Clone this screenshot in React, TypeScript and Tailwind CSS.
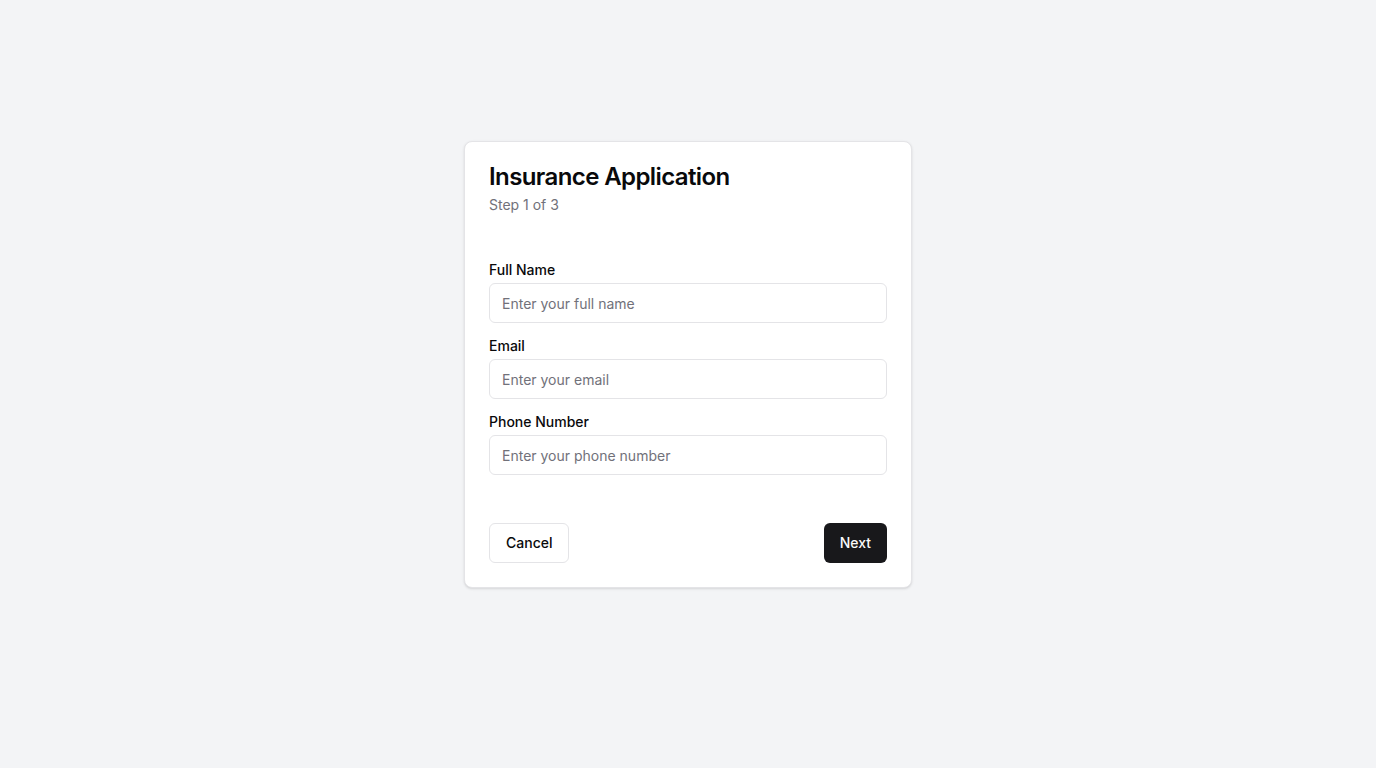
import { useState } from "react";

function Field({
  label,
  placeholder,
  type = "text",
}: {
  label: string;
  placeholder: string;
  type?: string;
}) {
  const [value, setValue] = useState("");
  return (
    <div>
      <label className="block text-sm font-medium text-[#09090b] mb-[3px]">
        {label}
      </label>
      <input
        type={type}
        value={value}
        onChange={(e) => setValue(e.target.value)}
        placeholder={placeholder}
        className="block w-full h-10 rounded-md border border-[#e4e4e7] bg-white px-3 text-sm text-[#09090b] placeholder:text-[#71717a] outline-none"
      />
    </div>
  );
}

export default function App() {
  return (
    <div
      className="min-h-screen bg-[#f3f4f6] flex justify-center pt-[141px]"
      style={{ fontFamily: "Inter, 'Liberation Sans', sans-serif" }}
    >
      <div className="w-[448px] h-fit bg-white border border-[#e4e4e7] rounded-lg shadow-sm">
        <div className="px-6 pt-[23px] pb-6 flex flex-col gap-1.5">
          <h1 className="text-2xl font-semibold leading-none tracking-tight text-[#09090b]">
            Insurance Application
          </h1>
          <p className="text-sm text-[#71717a]">Step 1 of 3</p>
        </div>
        <div className="px-6 pt-[21px] pb-6 flex flex-col gap-[13px]">
          <Field label="Full Name" placeholder="Enter your full name" />
          <Field label="Email" placeholder="Enter your email" type="email" />
          <Field
            label="Phone Number"
            placeholder="Enter your phone number"
            type="tel"
          />
        </div>
        <div className="px-6 pt-6 pb-6 flex items-center justify-between">
          <button className="h-10 px-4 rounded-md border border-[#e4e4e7] bg-white text-sm font-medium text-[#09090b]">
            Cancel
          </button>
          <button className="h-10 px-4 rounded-md bg-[#18181b] text-sm font-medium text-[#fafafa]">
            Next
          </button>
        </div>
      </div>
    </div>
  );
}
